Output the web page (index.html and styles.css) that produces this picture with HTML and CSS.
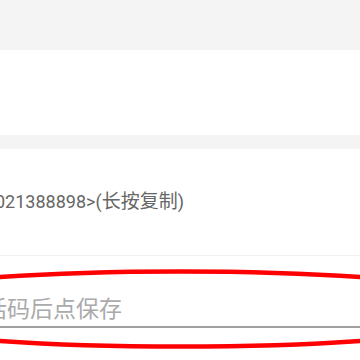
FILE: index.html
```html
<!DOCTYPE html>
<html lang="zh">
<head>
<meta charset="utf-8">
<link rel="stylesheet" href="styles.css">
</head>
<body>
<div class="page">
  <div class="band-top"></div>
  <div class="blank"></div>
  <div class="sep"></div>
  <div class="row">
    <span class="copy-text">021388898&gt;(<span class="cjk">长按复制</span>)</span>
  </div>
  <div class="divider"></div>
  <div class="input-wrap">
    <div class="field">话码后点保存</div>
  </div>
  <svg class="mark" width="360" height="360" viewBox="0 0 360 360">
    <ellipse cx="180" cy="309" rx="340" ry="37.5" fill="none" stroke="#ff0000" stroke-width="4.5"/>
  </svg>
</div>
</body>
</html>
```
FILE: styles.css
```css
html, body {
  margin: 0;
  padding: 0;
  background: #ffffff;
}
.page {
  position: relative;
  width: 360px;
  height: 360px;
  overflow: hidden;
  font-family: Roboto, "Noto Sans CJK SC", sans-serif;
}
.band-top {
  height: 50px;
  background: #f4f4f4;
}
.blank {
  height: 85px;
}
.sep {
  height: 14px;
  background: #f4f4f4;
}
.row {
  height: 106px;
  box-sizing: border-box;
  padding-top: 41px;
}
.copy-text {
  display: block;
  margin-left: -5px;
  font-size: 18px;
  line-height: 24px;
  color: #666666;
  white-space: nowrap;
}
.cjk {
  font-size: 19px;
}
.divider {
  height: 1px;
  background: #f2f2f2;
}
.input-wrap {
  padding-top: 40px;
}
.field {
  margin-left: -16px;
  font-size: 23px;
  line-height: 28px;
  height: 30px;
  color: #aaaaaa;
  border-bottom: 2px solid #a0a0a0;
  white-space: nowrap;
}
.mark {
  position: absolute;
  left: 0;
  top: 0;
  pointer-events: none;
}
```
